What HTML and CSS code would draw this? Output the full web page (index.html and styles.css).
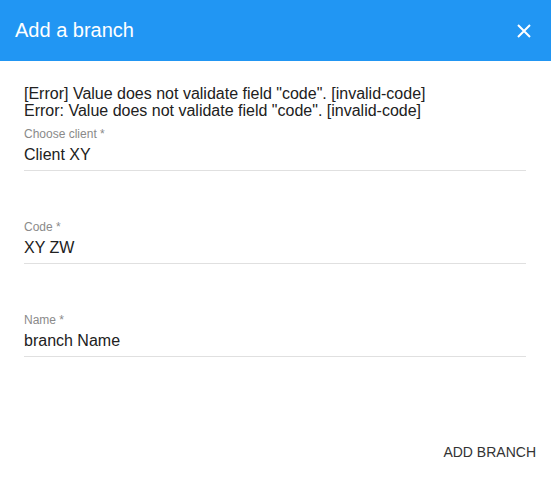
FILE: index.html
```html
<!DOCTYPE html>
<html>
<head>
<meta charset="utf-8">
<link rel="stylesheet" href="styles.css">
</head>
<body>
<div class="dialog">
  <header class="bar">
    <h1 class="title">Add a branch</h1>
    <button class="close" aria-label="Close">
      <svg width="14" height="14" viewBox="0 0 14 14"><path d="M1 1L13 13M13 1L1 13" stroke="#fff" stroke-width="2"/></svg>
    </button>
  </header>
  <div class="content">
    <div class="errors">
      <div>[Error] Value does not validate field "code". [invalid-code]</div>
      <div>Error: Value does not validate field "code". [invalid-code]</div>
    </div>
    <div class="field first">
      <label class="label">Choose client *</label>
      <div class="value">Client XY</div>
    </div>
    <div class="field">
      <label class="label">Code *</label>
      <div class="value">XY ZW</div>
    </div>
    <div class="field">
      <label class="label">Name *</label>
      <div class="value">branch Name</div>
    </div>
  </div>
  <div class="actions">
    <button class="btn">ADD BRANCH</button>
  </div>
</div>
</body>
</html>
```
FILE: styles.css
```css
html, body {
  margin: 0;
  padding: 0;
  background: #fff;
}
body {
  font-family: "Liberation Sans", Arial, sans-serif;
  color: #212121;
}
.dialog {
  width: 551px;
  height: 478px;
  display: flex;
  flex-direction: column;
}
.bar {
  height: 61px;
  background: #2196f3;
  display: flex;
  align-items: center;
  justify-content: space-between;
  padding: 0 20px 0 15px;
  box-sizing: border-box;
}
.title {
  margin: 0;
  font-size: 20px;
  font-weight: 400;
  color: #fff;
}
.close {
  background: none;
  border: 0;
  padding: 0;
  width: 14px;
  height: 14px;
  display: flex;
}
.content {
  padding: 24px 25px 0 24px;
  flex: 1;
}
.errors {
  font-size: 16px;
  line-height: 17px;
  color: #212121;
}
.field {
  margin-top: 49px;
  border-bottom: 1px solid #e0e0e0;
  padding-bottom: 5px;
}
.field.first {
  margin-top: 8px;
}
.label {
  display: block;
  font-size: 12px;
  color: #8a8a8a;
  line-height: 14px;
}
.value {
  font-size: 16px;
  line-height: 20px;
  margin-top: 4px;
  color: #212121;
}
.actions {
  display: flex;
  justify-content: flex-end;
  padding: 0 15px 18px 0;
}
.btn {
  background: none;
  border: 0;
  font-family: "Liberation Sans", Arial, sans-serif;
  font-size: 14px;
  color: #333;
  padding: 0;
}
```
